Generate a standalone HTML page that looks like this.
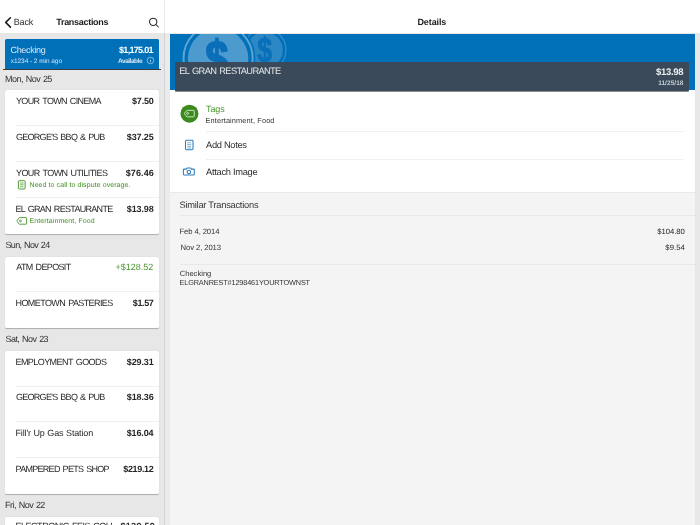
<!DOCTYPE html>
<html lang="en">
<head>
<meta charset="utf-8">
<title>Transactions</title>
<style>
*{box-sizing:border-box;margin:0;padding:0}
html,body{width:700px;height:525px;overflow:hidden;background:#e7e7e7;font-family:"Liberation Sans",sans-serif;color:#262626;text-rendering:geometricPrecision}
.abs{position:absolute}
#left,#rhead,#right,#strip{will-change:transform}
#left{position:absolute;left:0;top:0;width:165px;height:525px;background:#e7e7e7;overflow:hidden}
#lhead{position:absolute;left:0;top:0;width:165px;height:33.3px;background:#fff}
#divider{position:absolute;left:164.2px;top:0;width:0.8px;height:525px;background:rgba(0,0,0,.09)}
.t{position:absolute;white-space:nowrap;line-height:1}
.card{position:absolute;left:5.2px;width:153.8px;background:#fff;border-radius:1.5px;box-shadow:0 0.5px 0.8px rgba(0,0,0,.25)}
.sep{position:absolute;left:16px;width:143px;height:1px;background:#f0f0f0}
#rhead{position:absolute;left:165px;top:0;width:535px;height:33.4px;background:#fff}
#right{position:absolute;left:0;top:0;width:700px;height:525px;overflow:hidden}
.rsep{position:absolute;height:1px;background:#f0f0f0}
</style>
</head>
<body>
<div id="left">
<div id="lhead"></div>
<svg class="abs" style="left:4px;top:16px" width="8" height="13" viewBox="0 0 8 13"><path d="M6.4 1.7 L1.7 6.4 L6.4 11.1" fill="none" stroke="#1a1a1a" stroke-width="1.55" stroke-linecap="round" stroke-linejoin="round"/></svg>
<svg class="abs" style="left:147px;top:15px" width="14" height="14" viewBox="0 0 14 14"><circle cx="6.2" cy="6.8" r="3.65" fill="none" stroke="#262626" stroke-width="1.05"/><path d="M8.9 9.5 L11.4 12" stroke="#262626" stroke-width="1.05" stroke-linecap="round"/></svg>

<div class="t" id="back" style="left:13.75px;top:18.00px;font-size:9px;color:#2c2c2c;letter-spacing:-0.167px;">Back</div>
<div class="t" id="trans" style="left:56.25px;top:18.00px;font-size:9px;color:#1c1c1c;font-weight:bold;letter-spacing:-0.295px;">Transactions</div>
<div class="abs" style="left:5.3px;top:38.6px;width:153.6px;height:30.5px;background:#0070b9;border-radius:1.5px 1.5px 0 0"></div>
<div class="abs" style="left:3px;top:69.05px;width:158.4px;height:0.55px;background:rgba(20,20,20,.8)"></div>
<svg class="abs" style="left:145.5px;top:56.2px" width="9" height="9" viewBox="0 0 9 9"><circle cx="4.5" cy="4.5" r="3.3" fill="none" stroke="#b9d6ec" stroke-width="0.7"/><path d="M4.5 4 V6.3" stroke="#b9d6ec" stroke-width="0.8"/><circle cx="4.5" cy="2.9" r="0.45" fill="#b9d6ec"/></svg>

<div class="t" id="chk" style="left:10.50px;top:46.00px;font-size:9px;color:#d9e9f5;letter-spacing:-0.321px;">Checking</div>
<div class="t" id="x1234" style="left:10.75px;top:59.00px;font-size:6.5px;color:#d2e5f3;letter-spacing:-0.047px;">x1234 - 2 min ago</div>
<div class="t" id="bal" style="left:119.00px;top:46.00px;font-size:9px;color:#fff;font-weight:bold;letter-spacing:-0.687px;">$1,175.01</div>
<div class="t" id="avail" style="left:118.00px;top:59.00px;font-size:6.5px;color:#d2e5f3;font-weight:bold;letter-spacing:-0.469px;">Available</div>
<div class="t" id="sh0" style="left:5.00px;top:75.00px;font-size:9px;color:#333;letter-spacing:-0.525px;word-spacing:0.8px;">Mon, Nov 25</div>
<div class="card" style="top:90.4px;height:143.26px"></div>
<div class="t" id="n0" style="left:16.00px;top:97.00px;font-size:9px;color:#282828;letter-spacing:-0.650px;word-spacing:1.1px;">YOUR TOWN CINEMA</div>
<div class="t" id="a0" style="left:132.00px;top:97.00px;font-size:9px;color:#262626;font-weight:bold;letter-spacing:-0.188px;">$7.50</div>
<div class="sep" style="top:125.14px"></div>
<div class="t" id="n1" style="left:16.00px;top:133.00px;font-size:9px;color:#282828;letter-spacing:-0.721px;word-spacing:1.1px;">GEORGE'S BBQ &amp; PUB</div>
<div class="t" id="a1" style="left:126.75px;top:133.00px;font-size:9px;color:#262626;font-weight:bold;letter-spacing:-0.100px;">$37.25</div>
<div class="sep" style="top:161.03px"></div>
<div class="t" id="n2" style="left:16.00px;top:169.00px;font-size:9px;color:#282828;letter-spacing:-0.583px;word-spacing:1.1px;">YOUR TOWN UTILITIES</div>
<div class="t" id="a2" style="left:125.75px;top:169.00px;font-size:9px;color:#262626;font-weight:bold;letter-spacing:0.100px;">$76.46</div>
<svg class="abs" style="left:16.8px;top:180.48000000000002px" width="10" height="10" viewBox="0 0 10 10"><rect x="1.4" y="0.7" width="6.7" height="8.3" rx="0.7" fill="none" stroke="#3f8f20" stroke-width="0.9"/><path d="M2.9 3H6.6M2.9 4.8H6.6M2.9 6.8H6.6" stroke="#3f8f20" stroke-width="0.7"/></svg>
<div class="t" id="s2" style="left:29.50px;top:182.00px;font-size:7px;color:#3f8f20;letter-spacing:0.081px;">Need to call to dispute overage.</div>
<div class="sep" style="top:196.92px"></div>
<div class="t" id="n3" style="left:15.50px;top:205.00px;font-size:9px;color:#282828;letter-spacing:-0.694px;word-spacing:1.1px;">EL GRAN RESTAURANTE</div>
<div class="t" id="a3" style="left:126.75px;top:205.00px;font-size:9px;color:#262626;font-weight:bold;letter-spacing:-0.100px;">$13.98</div>
<svg class="abs" style="left:16px;top:217.32px" width="12" height="8" viewBox="0 0 12 8"><path d="M3.6 0.6 H10 Q10.6 0.6 10.6 1.2 V6.6 Q10.6 7.2 10 7.2 H3.6 Q3.2 7.2 2.9 6.9 L1.3 4.6 Q0.9 3.9 1.3 3.2 L2.9 0.9 Q3.2 0.6 3.6 0.6 Z" fill="none" stroke="#3f8f20" stroke-width="0.85" stroke-linejoin="round"/><circle cx="4.4" cy="3.9" r="0.95" fill="none" stroke="#3f8f20" stroke-width="0.8"/></svg>
<div class="t" id="s3" style="left:29.50px;top:218.00px;font-size:7px;color:#3f8f20;letter-spacing:0.097px;">Entertainment, Food</div>
<div class="t" id="sh1" style="left:5.50px;top:241.00px;font-size:9px;color:#333;letter-spacing:-0.650px;word-spacing:0.8px;">Sun, Nov 24</div>
<div class="card" style="top:256.6px;height:71.48px"></div>
<div class="t" id="n4" style="left:16.25px;top:263.00px;font-size:9px;color:#282828;letter-spacing:-0.650px;word-spacing:1.1px;">ATM DEPOSIT</div>
<div class="t" id="a4" style="left:115.50px;top:263.00px;font-size:9px;color:#4a962c;">+$128.52</div>
<div class="sep" style="top:291.34px"></div>
<div class="t" id="n5" style="left:15.50px;top:299.00px;font-size:9px;color:#282828;letter-spacing:-0.589px;word-spacing:1.1px;">HOMETOWN PASTERIES</div>
<div class="t" id="a5" style="left:132.75px;top:299.00px;font-size:9px;color:#262626;font-weight:bold;letter-spacing:-0.375px;">$1.57</div>
<div class="t" id="sh2" style="left:5.50px;top:335.00px;font-size:9px;color:#333;letter-spacing:-0.550px;word-spacing:0.8px;">Sat, Nov 23</div>
<div class="card" style="top:350.8px;height:143.26px"></div>
<div class="t" id="n6" style="left:15.50px;top:358.00px;font-size:9px;color:#282828;letter-spacing:-0.567px;word-spacing:1.1px;">EMPLOYMENT GOODS</div>
<div class="t" id="a6" style="left:126.75px;top:358.00px;font-size:9px;color:#262626;font-weight:bold;letter-spacing:-0.100px;">$29.31</div>
<div class="sep" style="top:385.54px"></div>
<div class="t" id="n7" style="left:16.00px;top:393.00px;font-size:9px;color:#282828;letter-spacing:-0.721px;word-spacing:1.1px;">GEORGE'S BBQ &amp; PUB</div>
<div class="t" id="a7" style="left:126.75px;top:393.00px;font-size:9px;color:#262626;font-weight:bold;letter-spacing:-0.100px;">$18.36</div>
<div class="sep" style="top:421.43px"></div>
<div class="t" id="n8" style="left:15.50px;top:429.00px;font-size:9px;color:#282828;letter-spacing:-0.150px;word-spacing:0.3px;">Fill'r Up Gas Station</div>
<div class="t" id="a8" style="left:126.75px;top:429.00px;font-size:9px;color:#262626;font-weight:bold;letter-spacing:-0.150px;">$16.04</div>
<div class="sep" style="top:457.32px"></div>
<div class="t" id="n9" style="left:15.50px;top:465.00px;font-size:9px;color:#282828;letter-spacing:-0.706px;word-spacing:1.1px;">PAMPERED PETS SHOP</div>
<div class="t" id="a9" style="left:123.25px;top:465.00px;font-size:9px;color:#262626;font-weight:bold;letter-spacing:-0.333px;">$219.12</div>
<div class="t" id="sh3" style="left:5.00px;top:501.00px;font-size:9px;color:#333;letter-spacing:-0.525px;word-spacing:0.8px;">Fri, Nov 22</div>
<div class="card" style="top:516.6px;height:71.48px"></div>
<div class="t" id="n10" style="left:15.50px;top:522.00px;font-size:9px;color:#282828;letter-spacing:-0.473px;word-spacing:1.1px;">ELECTRONIC FEIS COLL</div>
<div class="t" id="a10" style="left:120.50px;top:522.00px;font-size:9px;color:#262626;font-weight:bold;letter-spacing:0.292px;">$129.50</div>
</div>
<div id="divider"></div>
<div id="rhead">
</div>

<div id="right">
<div class="abs" style="left:165px;top:33.4px;width:5px;height:492px;background:#ebebeb"></div>
<div class="abs" style="left:169.7px;top:33.5px;width:525.3px;height:491.6px;background:#f4f4f4"></div>
<div class="abs" style="left:169.7px;top:90.2px;width:525.3px;height:101.8px;background:#fff"></div>
<div class="abs" style="left:169.7px;top:191.6px;width:525.3px;height:0.8px;background:#e9e9e9"></div>
<div class="abs" style="left:169.7px;top:33.5px;width:525.3px;height:56.7px;background:#0070b9;overflow:hidden">
<svg class="abs" style="left:0;top:0" width="140" height="57" viewBox="169.7 33.5 140 57">
<g font-family="Liberation Sans, sans-serif" font-weight="bold" text-anchor="middle">
<circle cx="264.5" cy="49.5" r="21.2" fill="none" stroke="#fff" stroke-opacity=".2" stroke-width="1.3"/>
<circle cx="264.5" cy="49.5" r="18" fill="#fff" fill-opacity=".17"/>
<text transform="translate(264.3,61.5) scale(0.76,1)" font-size="35" fill="#0a70b8" stroke="#0a70b8" stroke-width="0.9" stroke-linejoin="round">$</text>
<circle cx="217.8" cy="58" r="37.3" fill="#0070b9"/>
<circle cx="217.8" cy="58" r="34.6" fill="none" stroke="#fff" stroke-opacity=".36" stroke-width="2"/>
<circle cx="217.8" cy="58" r="30.2" fill="#fff" fill-opacity=".3"/>
<text transform="translate(216.4,76.4) scale(0.8,1)" font-size="52" fill="#0a6fb8" stroke="#0a6fb8" stroke-width="1.8" stroke-linejoin="round">$</text>
</g></svg></div>
<div class="abs" style="left:175px;top:62px;width:514.3px;height:28.8px;background:#3a4a5a;border-radius:1px;box-shadow:0 0.7px 0.5px rgba(0,0,0,.6)"></div>
<svg class="abs" style="left:180px;top:104px" width="20" height="20" viewBox="0 0 20 20"><circle cx="9.45" cy="9.7" r="9" fill="#3a8a1c"/><path d="M7.4 6.35 H13.5 Q14.25 6.35 14.25 7.1 V12.1 Q14.25 12.85 13.5 12.85 H7.4 Q6.9 12.85 6.6 12.5 L4.8 10.3 Q4.3 9.6 4.8 8.9 L6.6 6.7 Q6.9 6.35 7.4 6.35 Z" fill="none" stroke="#fff" stroke-opacity=".85" stroke-width="0.9" stroke-linejoin="round"/><circle cx="7.7" cy="9.4" r="1" fill="none" stroke="#fff" stroke-opacity=".85" stroke-width="0.8"/></svg>
<svg class="abs" style="left:184px;top:139px" width="11" height="12" viewBox="0 0 11 12"><rect x="1.5" y="1.3" width="7.5" height="9.4" rx="0.9" fill="none" stroke="#2f7dbb" stroke-width="1.05"/><path d="M3.3 3.8H7.2M3.3 5.6H7.2M3.3 7.4H7.2M3.3 9.1H7.2" stroke="#2f7dbb" stroke-width="0.6"/></svg>
<svg class="abs" style="left:182px;top:166px" width="14" height="11" viewBox="0 0 14 11"><path d="M2.1 3.1 H4.3 L5 2 H8.7 L9.4 3.1 H11.6 Q12.3 3.1 12.3 3.8 V8.2 Q12.3 8.9 11.6 8.9 H2.1 Q1.4 8.9 1.4 8.2 V3.8 Q1.4 3.1 2.1 3.1 Z" fill="none" stroke="#2f7dbb" stroke-width="1.05" stroke-linejoin="round"/><circle cx="6.85" cy="5.9" r="1.7" fill="none" stroke="#2f7dbb" stroke-width="1.05"/></svg>
<div class="rsep" style="left:206px;width:477.4px;top:130.9px"></div>
<div class="rsep" style="left:206px;width:477.4px;top:158.9px"></div>
<div class="rsep" style="left:180px;width:515px;top:214.8px;background:#e8e8e8"></div>
<div class="rsep" style="left:180px;width:515px;top:263.8px;background:#e8e8e8"></div>

<div class="t" id="details" style="left:417.50px;top:18.00px;font-size:9px;color:#1c1c1c;font-weight:bold;letter-spacing:-0.125px;">Details</div>
<div class="t" id="r_name" style="left:179.25px;top:67.00px;font-size:9.3px;color:#e4e6e8;letter-spacing:-0.653px;word-spacing:1.1px;">EL GRAN RESTAURANTE</div>
<div class="t" id="r_amt" style="left:656.00px;top:68.00px;font-size:9.5px;color:#eceeef;font-weight:bold;letter-spacing:-0.320px;">$13.98</div>
<div class="t" id="r_date" style="left:658.15px;top:81.00px;font-size:6.5px;color:#c5cbd1;font-weight:bold;letter-spacing:0.052px;">11/25/18</div>
<div class="t" id="r_tags" style="left:206.00px;top:105.00px;font-size:9px;color:#4a962c;letter-spacing:-0.099px;">Tags</div>
<div class="t" id="r_ef" style="left:205.50px;top:117.00px;font-size:7.4px;color:#333;letter-spacing:0.111px;">Entertainment, Food</div>
<div class="t" id="r_notes" style="left:206.00px;top:141.00px;font-size:9.3px;color:#2c2c2c;letter-spacing:-0.309px;">Add Notes</div>
<div class="t" id="r_img" style="left:206.00px;top:168.00px;font-size:9.3px;color:#2c2c2c;letter-spacing:-0.289px;">Attach Image</div>
<div class="t" id="r_sim" style="left:179.50px;top:201.00px;font-size:9.3px;color:#333;letter-spacing:-0.246px;">Similar Transactions</div>
<div class="t" id="r_d1" style="left:179.50px;top:228.00px;font-size:7.7px;color:#333;letter-spacing:-0.105px;">Feb 4, 2014</div>
<div class="t" id="r_d2" style="left:180.50px;top:244.00px;font-size:7.7px;color:#333;letter-spacing:-0.090px;">Nov 2, 2013</div>
<div class="t" id="r_a1" style="left:657.35px;top:228.00px;font-size:7.7px;color:#222;letter-spacing:-0.058px;">$104.80</div>
<div class="t" id="r_a2" style="left:665.35px;top:244.00px;font-size:7.7px;color:#222;letter-spacing:0.039px;">$9.54</div>
<div class="t" id="r_chk" style="left:179.75px;top:270.00px;font-size:7.5px;color:#333;letter-spacing:0.036px;">Checking</div>
<div class="t" id="r_memo" style="left:179.50px;top:279.00px;font-size:7.3px;color:#333;letter-spacing:-0.141px;">ELGRANREST#1298461YOURTOWNST</div>
</div>
<div id="strip" class="abs" style="left:694.8px;top:33.3px;width:5.2px;height:492px;background:#e7e7e7"></div>

</body>
</html>
